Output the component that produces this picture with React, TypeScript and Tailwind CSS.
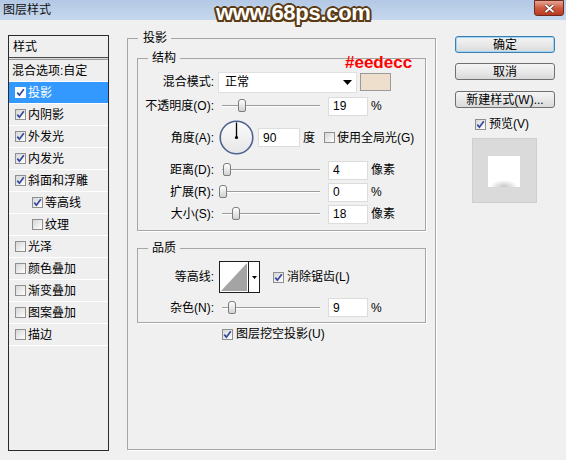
import React from 'react';

const font = "font-['Liberation_Sans','Noto_Sans_CJK_SC',sans-serif]";

function Check({ on, light }: { on: boolean; light?: boolean }) {
  return (
    <span
      className={`flex h-[11px] w-[11px] shrink-0 items-center justify-center border ${
        light ? 'border-white bg-white' : 'border-[#8e8f8f] bg-linear-to-br from-[#d6d6d6] to-white'
      }`}
    >
      {on && (
        <svg width="9" height="9" viewBox="0 0 9 9">
          <path d="M1.3 4.6 L3.4 7.2 L7.8 1.2" stroke="#33489e" strokeWidth="1.7" fill="none" />
        </svg>
      )}
    </span>
  );
}

function Slider({ pos }: { pos: number }) {
  return (
    <div className="relative h-[20px] w-[106px] shrink-0">
      <div className="absolute left-[4px] right-[4px] top-[9px] h-[2px] border-t border-b border-t-[#9c9c9c] border-b-white" />
      <div
        className="absolute top-[3px] h-[13px] w-[8px] rounded-t-[3px] rounded-b-[2px] border border-[#7d7d7d] bg-linear-to-b from-white to-[#d2d2d2]"
        style={{ left: pos }}
      />
    </div>
  );
}

function Field({ value, w = 'w-[40px]' }: { value: string; w?: string }) {
  return (
    <div className={`${w} flex h-[19px] shrink-0 items-center border border-[#dcdcdc] bg-white pl-[4px]`}>
      {value}
    </div>
  );
}

function Label({ children }: { children: React.ReactNode }) {
  return <div className="w-[76px] shrink-0 text-right">{children}</div>;
}

function GroupLabel({ children }: { children: React.ReactNode }) {
  return (
    <div className="absolute -top-[9px] left-[10px] bg-[#f0f0f0] px-[4px] leading-[16px]">{children}</div>
  );
}

const styleItems = [
  { name: '投影', on: true, sel: true },
  { name: '内阴影', on: true },
  { name: '外发光', on: true },
  { name: '内发光', on: true },
  { name: '斜面和浮雕', on: true },
  { name: '等高线', on: true, indent: true },
  { name: '纹理', on: false, indent: true },
  { name: '光泽', on: false },
  { name: '颜色叠加', on: false },
  { name: '渐变叠加', on: false },
  { name: '图案叠加', on: false },
  { name: '描边', on: false },
];

function Button({ children, primary }: { children: React.ReactNode; primary?: boolean }) {
  return (
    <div
      className={`flex h-[17px] w-[100px] items-center justify-center rounded-[3px] border bg-linear-to-b from-[#f4f4f4] via-[#e9e9e9] to-[#d9d9d9] leading-[14px] ${
        primary ? 'border-[#3c7fb1] shadow-[inset_0_0_0_1px_#9fd5f5]' : 'border-[#707070]'
      }`}
    >
      {children}
    </div>
  );
}

export default function App() {
  return (
    <div className={`h-[460px] w-[566px] overflow-hidden bg-[#f0f0f0] text-[12px] leading-[14px] text-black ${font}`}>
      {/* title bar */}
      <div className="relative flex h-[20px] items-center bg-linear-to-b from-[#b3c8e4] to-[#c6d8ee] pl-[3px]">
        <span className="text-[12px] text-[#111]">图层样式</span>
        <div className="absolute left-[216px] top-[0px] font-['Liberation_Sans',sans-serif] text-[22px] font-bold leading-[26px] tracking-[-0.3px] text-white [text-shadow:-2px_0_0_#5b3b14,2px_0_0_#5b3b14,0_-2px_0_#5b3b14,0_2px_0_#5b3b14,-1.5px_-1.5px_0_#5b3b14,1.5px_-1.5px_0_#5b3b14,-1.5px_1.5px_0_#5b3b14,1.5px_1.5px_0_#5b3b14]">
          www.68ps.com
        </div>
        <div className="absolute right-[2px] top-0 flex h-[16px] w-[30px] items-center justify-center rounded-b-[3px] border border-[#6e2a1c] bg-linear-to-b from-[#e5a494] via-[#cf5a40] to-[#b8391f]">
          <svg width="11" height="9" viewBox="0 0 11 9">
            <path d="M1.5 1 L9.5 8 M9.5 1 L1.5 8" stroke="#5a2a20" strokeWidth="3.2" />
            <path d="M1.5 1 L9.5 8 M9.5 1 L1.5 8" stroke="#fff" strokeWidth="1.8" />
          </svg>
        </div>
      </div>

      <div className="flex items-start">
        {/* left styles list */}
        <div className="ml-[8px] mt-[15px] h-[416px] w-[101px] shrink-0 border border-[#2a2a2a] bg-[#efefef]">
          <div className="flex h-[21px] items-center pl-[4px]">样式</div>
          <div className="h-[3px] border-t border-b border-t-[#4a4a4a] border-b-[#9a9a9a] bg-[#dcdcdc]" />
          <div className="flex h-[22px] items-center border-b border-white pl-[3px]">混合选项:自定</div>
          {styleItems.map((s) => (
            <div
              key={s.name}
              className={`flex h-[22px] items-center gap-[2px] border-b border-white ${
                s.indent ? 'pl-[23px]' : 'pl-[6px]'
              } ${s.sel ? 'bg-[#3399ff] text-white' : ''}`}
            >
              <Check on={s.on} light={s.sel} />
              <span>{s.name}</span>
            </div>
          ))}
        </div>

        {/* middle settings */}
        <div className="relative ml-[18px] mt-[18px] h-[412px] w-[309px] shrink-0 border border-[#a6a6a6] shadow-[1px_1px_0_#fff]">
          <GroupLabel>
            <span className="pl-[1px]">投影</span>
          </GroupLabel>

          {/* 结构 */}
          <div className="relative ml-[9px] mt-[19px] h-[173px] w-[289px] border border-[#a6a6a6] shadow-[1px_1px_0_#fff]">
            <GroupLabel>结构</GroupLabel>
            <div className="absolute -top-[5px] left-[207px] font-['Liberation_Sans',sans-serif] text-[17px] font-bold leading-[17px] text-[#ff0000]">
              #eedecc
            </div>

            <div className="mt-[12px] flex h-[22px] items-center">
              <Label>混合模式:</Label>
              <div className="ml-[4px] flex h-[21px] w-[139px] items-center justify-between border border-[#e0e0e0] bg-white pl-[6px] pr-[4px]">
                <span>正常</span>
                <svg width="9" height="5" viewBox="0 0 9 5">
                  <path d="M0 0 H9 L4.5 5 Z" fill="#000" />
                </svg>
              </div>
              <div className="ml-[3px] h-[18px] w-[31px] border border-[#9a9a9a] bg-[#eedecc]" />
            </div>

            <div className="mt-[3px] flex h-[20px] items-center">
              <Label>不透明度(O):</Label>
              <div className="ml-[4px]">
                <Slider pos={20} />
              </div>
              <div className="ml-[4px]">
                <Field value="19" />
              </div>
              <span className="ml-[3px]">%</span>
            </div>

            <div className="mt-[4px] flex h-[35px] items-center">
              <Label>角度(A):</Label>
              <svg className="ml-[5px] shrink-0" width="35" height="35" viewBox="0 0 35 35">
                <defs>
                  <linearGradient id="dial" x1="0" y1="0" x2="0" y2="1">
                    <stop offset="0" stopColor="#fbfbfb" />
                    <stop offset="1" stopColor="#e6e6e6" />
                  </linearGradient>
                </defs>
                <circle cx="17.5" cy="17.5" r="16.3" fill="url(#dial)" stroke="#4d6390" strokeWidth="1.6" />
                <line x1="17.5" y1="17.5" x2="17.5" y2="2.5" stroke="#000" strokeWidth="1.3" />
                <circle cx="17.5" cy="17.5" r="1.6" fill="#000" />
              </svg>
              <div className="ml-[4px]">
                <Field value="90" w="w-[42px]" />
              </div>
              <span className="ml-[3px]">度</span>
              <span className="ml-[9px]">
                <Check on={false} />
              </span>
              <span className="ml-[2px]">使用全局光(G)</span>
            </div>

            <div className="mt-[5px] flex h-[20px] items-center">
              <Label>距离(D):</Label>
              <div className="ml-[4px]">
                <Slider pos={5} />
              </div>
              <div className="ml-[4px]">
                <Field value="4" />
              </div>
              <span className="ml-[3px]">像素</span>
            </div>

            <div className="mt-[2px] flex h-[20px] items-center">
              <Label>扩展(R):</Label>
              <div className="ml-[4px]">
                <Slider pos={1} />
              </div>
              <div className="ml-[4px]">
                <Field value="0" />
              </div>
              <span className="ml-[3px]">%</span>
            </div>

            <div className="mt-[2px] flex h-[20px] items-center">
              <Label>大小(S):</Label>
              <div className="ml-[4px]">
                <Slider pos={14} />
              </div>
              <div className="ml-[4px]">
                <Field value="18" />
              </div>
              <span className="ml-[3px]">像素</span>
            </div>
          </div>

          {/* 品质 */}
          <div className="relative ml-[9px] mt-[17px] h-[75px] w-[289px] border border-[#a6a6a6] shadow-[1px_1px_0_#fff]">
            <GroupLabel>品质</GroupLabel>
            <div className="mt-[12px] flex h-[32px] items-center">
              <Label>等高线:</Label>
              <div className="ml-[5px] flex h-[32px] w-[41px] shrink-0 border border-[#1e1e1e] bg-white">
                <svg width="28" height="30" viewBox="0 0 28 30">
                  <polygon points="1,29 27,1 27,29" fill="#a4a4a4" />
                </svg>
                <div className="flex flex-1 items-center justify-center border-l border-[#1e1e1e]">
                  <svg width="5" height="3" viewBox="0 0 5 3">
                    <path d="M0 0 H5 L2.5 3 Z" fill="#000" />
                  </svg>
                </div>
              </div>
              <span className="ml-[13px]">
                <Check on />
              </span>
              <span className="ml-[3px]">消除锯齿(L)</span>
            </div>
            <div className="mt-[5px] flex h-[19px] items-center">
              <Label>杂色(N):</Label>
              <div className="ml-[4px]">
                <Slider pos={10} />
              </div>
              <div className="ml-[4px]">
                <Field value="9" />
              </div>
              <span className="ml-[3px]">%</span>
            </div>
          </div>

          <div className="mt-[4px] flex h-[14px] items-center gap-[3px] pl-[94px]">
            <Check on />
            <span>图层挖空投影(U)</span>
          </div>
        </div>

        {/* right buttons */}
        <div className="ml-[19px] mt-[16px] flex w-[100px] shrink-0 flex-col">
          <Button primary>确定</Button>
          <div className="mt-[10px]">
            <Button>取消</Button>
          </div>
          <div className="mt-[11px]">
            <Button>新建样式(W)...</Button>
          </div>
          <div className="mt-[9px] flex h-[14px] items-center gap-[3px] pl-[20px]">
            <Check on />
            <span>预览(V)</span>
          </div>
          <div className="ml-[17px] mt-[7px] flex h-[65px] w-[65px] items-start border border-[#cfcfcf] bg-[#dadada] pl-[15px] pt-[17px]">
            <div className="h-[31px] w-[32px] bg-[radial-gradient(ellipse_14px_7px_at_50%_100%,#c4c4c4,#ffffff)]" />
          </div>
        </div>
      </div>
    </div>
  );
}
